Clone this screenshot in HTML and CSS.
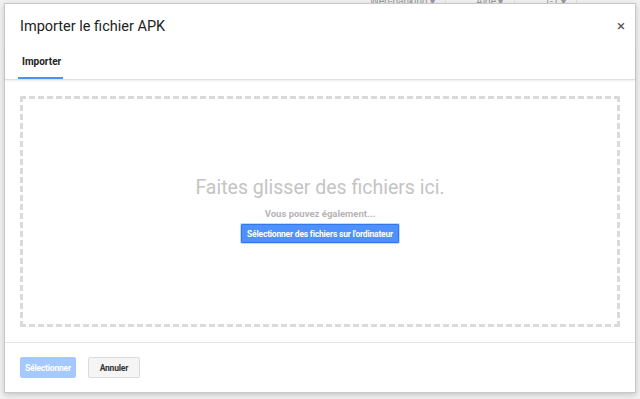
FILE: index.html
```html
<!DOCTYPE html>
<html lang="fr">
<head>
<meta charset="utf-8">
<link rel="stylesheet" href="styles.css">
</head>
<body>
<div class="backdrop">
  <div class="bg-bar">
    <span class="bg-item">Web-banking ▾</span>
    <span class="bg-item">Aide ▾</span>
    <span class="bg-item">1-1 ▾</span>
  </div>
  <div class="dialog">
    <div class="head">
      <h1 class="title">Importer le fichier APK</h1>
      <span class="close">×</span>
    </div>
    <div class="tabs">
      <span class="tab">Importer</span>
    </div>
    <div class="body">
      <div class="drop">
        <div class="drop-main">Faites glisser des fichiers ici.</div>
        <div class="drop-sub">Vous pouvez également...</div>
        <button class="pick">Sélectionner des fichiers sur l'ordinateur</button>
      </div>
    </div>
    <div class="foot">
      <button class="btn primary">Sélectionner</button>
      <button class="btn">Annuler</button>
    </div>
  </div>
</div>
</body>
</html>
```
FILE: styles.css
```css
html, body { margin: 0; padding: 0; }
body {
  width: 640px; height: 399px; overflow: hidden;
  background: #f1f1f1;
  font-family: Roboto, "Liberation Sans", Arial, sans-serif;
}
.backdrop { position: relative; width: 640px; height: 399px; }
.bg-bar {
  position: absolute; top: -4px; left: 360px;
  display: flex; gap: 20px;
  font-size: 10px; line-height: 12px; color: #999;
}
.bg-item { padding: 0 10px; border-right: 1px solid #ddd; }
.dialog {
  position: absolute; left: 4px; top: 3px;
  width: 630px; height: 388px;
  background: #fff;
  border: 1px solid #c8c8c8;
  box-shadow: 0 2px 6px rgba(0,0,0,0.18);
  display: flex; flex-direction: column;
}
.head {
  height: 44px;
  display: flex; align-items: center; justify-content: space-between;
  padding: 0 10px 0 15px;
}
.title {
  margin: 0; font-weight: 400; font-size: 14.5px; color: #222;
}
.close { font-size: 15px; color: #555; }
.tabs {
  height: 31px; padding-left: 13px;
  border-bottom: 1px solid #e0e0e0;
  box-shadow: 0 1px 2px rgba(0,0,0,0.08);
  display: flex; align-items: flex-end;
}
.tab {
  font-size: 10px; font-weight: 700; color: #222;
  padding: 0 4px 10px 4px;
  border-bottom: 2px solid #4d90fe;
  width: 37px;
}
.body {
  flex: 1; padding: 16px 15px 15px 15px;
  display: flex;
  border-bottom: 1px solid #e5e5e5;
}
.drop {
  flex: 1;
  border: 3px dashed #dadada;
  display: flex; flex-direction: column; align-items: center;
  padding-top: 77px;
}
.drop-main { font-size: 19.5px; color: #c4c4c4; line-height: 24px; }
.drop-sub {
  font-size: 9.5px; font-weight: 700; color: #b5b5b5;
  margin-top: 8px; line-height: 12px;
}
.pick {
  margin-top: 4px;
  font-family: inherit; font-size: 8.5px; font-weight: 700; color: #fff;
  letter-spacing: -0.2px;
  white-space: nowrap;
  background: #4d90fe;
  border: 1px solid #3079ed;
  box-shadow: 0 0 0 1px #c3d9ff;
  padding: 0 5px; height: 19px;
  border-radius: 1px;
}
.foot {
  height: 49px;
  display: flex; align-items: center; gap: 12px;
  padding-left: 15px;
}
.btn {
  font-family: inherit; font-size: 8.5px; font-weight: 700;
  letter-spacing: -0.2px;
  white-space: nowrap;
  height: 21px; padding: 0 6px; border-radius: 2px;
  background: #f5f5f5; border: 1px solid #dcdcdc; color: #333;
  min-width: 52px;
}
.btn.primary {
  background: #a5c8fe; border-color: #a5c8fe; color: #fff;
  padding: 0 4px;
}
```
